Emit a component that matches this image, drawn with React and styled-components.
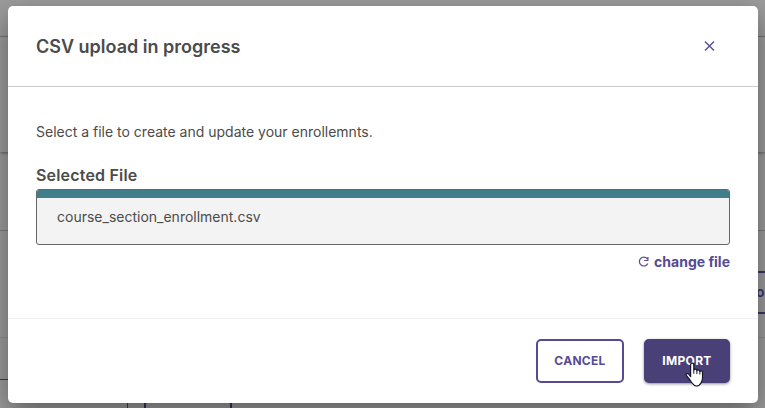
import React from "react";
import styled, { createGlobalStyle } from "styled-components";

const GlobalStyle = createGlobalStyle`
  *, *::before, *::after { box-sizing: border-box; }
  body {
    margin: 0;
    overflow: hidden;
    font-family: Inter, "Liberation Sans", sans-serif;
    color: #4b4b4b;
  }
  h1, h2, p { margin: 0; }
  button { font: inherit; cursor: pointer; }
`;

const Screen = styled.div`
  position: relative;
  width: 765px;
  height: 408px;
  overflow: hidden;
  background: #9c9c9c;
`;

const Page = styled.div`
  display: flex;
  flex-direction: column;
  height: 408px;
`;

const TopBar = styled.div`
  height: 37px;
  flex: none;
  border-bottom: 1px solid #7b7b7b;
`;

const Banner = styled.div`
  height: 115px;
  flex: none;
  background: #9c9c9c;
  box-shadow: 0 1px 3px rgba(0, 0, 0, 0.4);
`;

const Strip = styled.div`
  height: 79px;
  flex: none;
  border-bottom: 1px solid #7b7b7b;
`;

const Actions = styled.div`
  height: 107px;
  flex: none;
  padding-top: 40px;
  display: flex;
  justify-content: flex-end;
  border-bottom: 1px solid #8d8d8d;
`;

const PageButton = styled.div`
  width: 35px;
  height: 43px;
  flex: none;
  padding-left: 26px;
  border: solid #3a3468;
  border-width: 2px 0;
  color: #3a3468;
  font-size: 14px;
  font-weight: 600;
  line-height: 38px;
  overflow: hidden;
`;

const TableArea = styled.div`
  flex: 1;
  display: flex;
  align-items: flex-end;
  gap: 16px;
`;

const SearchField = styled.div`
  width: 128px;
  height: 29px;
  border: solid #404040;
  border-width: 1px 1px 0 0;
`;

const FilterButton = styled.div`
  width: 88px;
  height: 29px;
  border: solid #37315f;
  border-width: 2px 2px 0;
`;

const Dialog = styled.section`
  position: absolute;
  left: 8px;
  top: 6px;
  width: 750px;
  height: 397px;
  display: flex;
  flex-direction: column;
  background: #fff;
  border-radius: 5px;
  box-shadow: 0 10px 28px rgba(0, 0, 0, 0.4);
`;

const Header = styled.header`
  height: 81px;
  flex: none;
  display: flex;
  align-items: center;
  justify-content: space-between;
  padding: 0 42px 0 28px;
  border-bottom: 1px solid #cbcbcb;
`;

const Title = styled.h1`
  padding-top: 2px;
  font-size: 18px;
  line-height: 24px;
  font-weight: 600;
`;

const CloseButton = styled.button`
  display: flex;
  padding: 0;
  border: 0;
  background: none;
  color: #554b93;
`;

const Body = styled.div`
  flex: 1;
  padding: 35px 28px 0;
`;

const Intro = styled.p`
  font-size: 14px;
  line-height: 20px;
`;

const FieldLabel = styled.h2`
  margin-top: 21px;
  font-size: 16px;
  line-height: 24px;
  font-weight: 600;
  letter-spacing: 0.18px;
`;

const FileBox = styled.div`
  height: 56px;
  margin-top: 2px;
  border: 1px solid #666;
  border-radius: 3px;
  background: #f3f3f3;
  overflow: hidden;
`;

const Progress = styled.div`
  height: 8px;
  background: #417d8b;
`;

const FileName = styled.p`
  padding: 9px 20px 0;
  font-size: 14px;
  line-height: 20px;
`;

const ChangeFile = styled.button`
  display: flex;
  align-items: center;
  gap: 4px;
  margin: 7px 0 0 auto;
  padding: 0;
  border: 0;
  background: none;
  color: #554b93;
  font-size: 14px;
  line-height: 20px;
  font-weight: 700;
`;

const Footer = styled.footer`
  height: 85px;
  flex: none;
  display: flex;
  justify-content: flex-end;
  gap: 20px;
  padding: 20px 28px 0;
  border-top: 1px solid #f0f0f0;
`;

const Button = styled.button`
  width: ${(p) => (p.$primary ? 86 : 88)}px;
  height: 44px;
  padding: 0 0 2px;
  border: 2px solid ${(p) => (p.$primary ? "#484076" : "#554b93")};
  border-radius: 5px;
  background: ${(p) => (p.$primary ? "#484076" : "#fff")};
  color: ${(p) => (p.$primary ? "#fff" : "#554b93")};
  box-shadow: ${(p) => (p.$primary ? "0 1px 3px rgba(0, 0, 0, 0.45)" : "none")};
  font-size: 12px;
  font-weight: 700;
  letter-spacing: 0.3px;
`;

const Pointer = styled.svg`
  position: absolute;
  left: 685px;
  top: 362px;
`;

const CloseIcon = () => (
  <svg width="13" height="12" viewBox="0 0 13 12" fill="none" stroke="currentColor" strokeWidth="1.4">
    <path d="M2 1.5l9 9M11 1.5l-9 9" />
  </svg>
);

const RefreshIcon = () => (
  <svg width="12" height="12" viewBox="0 0 12 12" fill="none" stroke="currentColor" strokeWidth="1.2">
    <path d="M9.2 2.8A4.4 4.4 0 1 0 9.8 7.4M9.9 1v3.5H6.2" />
  </svg>
);

const HandPointer = () => (
  <Pointer width="20" height="26" viewBox="0 0 20 26" aria-hidden="true">
    <path
      d="M5.6 14.7V2.9C5.6.5 8.8.5 8.8 2.9v5.1c.2-1.2 3-1.1 3.1.6.5-1 2.9-.7 3 .8.7-.9 2.6-.4 2.6 1.2v5.6c0 2-.6 3.2-1.5 4.7-.5 1-1.8 3.1-4.8 3.1-2.2 0-3.5-1.5-6.2-6l-3.3-4c-1.6-2.1.8-3.2 2.3-1.7z"
      fill="#fff"
      stroke="#17162a"
      strokeWidth="1.2"
      strokeLinejoin="round"
    />
    <path d="M8.8 7.8v4M11.9 8.4v3.7M14.9 9.2v3.3" fill="none" stroke="#17162a" strokeWidth="1" />
  </Pointer>
);

export default function App() {
  return (
    <Screen>
      <GlobalStyle />
      <Page>
        <TopBar />
        <Banner />
        <Strip />
        <Actions>
          <PageButton>o</PageButton>
        </Actions>
        <TableArea>
          <SearchField />
          <FilterButton />
        </TableArea>
      </Page>
      <Dialog role="dialog" aria-modal="true">
        <Header>
          <Title>CSV upload in progress</Title>
          <CloseButton aria-label="Close">
            <CloseIcon />
          </CloseButton>
        </Header>
        <Body>
          <Intro>Select a file to create and update your enrollemnts.</Intro>
          <FieldLabel>Selected File</FieldLabel>
          <FileBox>
            <Progress />
            <FileName>course_section_enrollment.csv</FileName>
          </FileBox>
          <ChangeFile>
            <RefreshIcon />
            change file
          </ChangeFile>
        </Body>
        <Footer>
          <Button>CANCEL</Button>
          <Button $primary>IMPORT</Button>
        </Footer>
      </Dialog>
      <HandPointer />
    </Screen>
  );
}
